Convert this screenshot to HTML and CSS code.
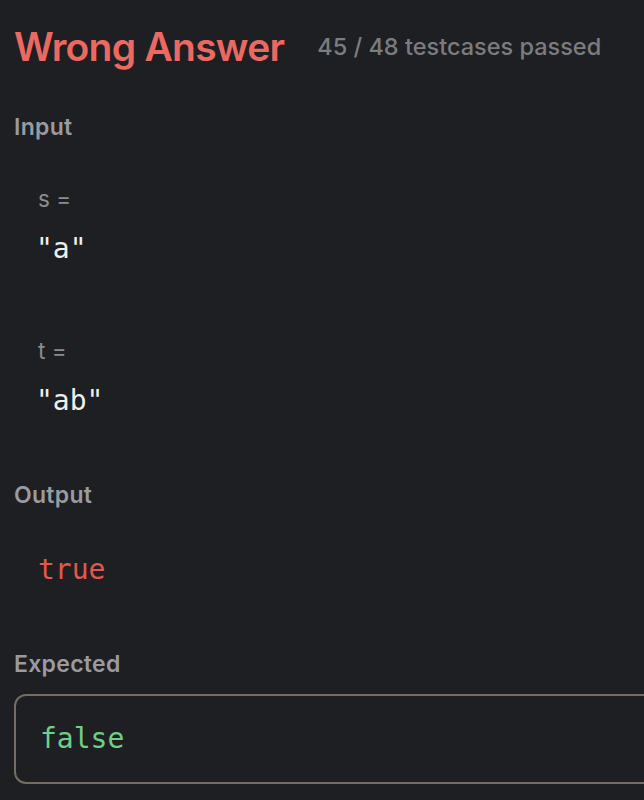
FILE: index.html
```html
<!DOCTYPE html>
<html lang="en">
<head>
<meta charset="utf-8">
<title>Wrong Answer</title>
<link rel="stylesheet" href="styles.css">
</head>
<body>
<div class="page">
  <div class="header">
    <h1 class="title">Wrong Answer</h1>
    <span class="passed">45 / 48 testcases passed</span>
  </div>

  <div class="section-label label-input">Input</div>
  <div class="vars">
    <div class="var-name">s =</div>
    <div class="var-value">"a"</div>
    <div class="var-name var-name-next">t =</div>
    <div class="var-value">"ab"</div>
  </div>

  <div class="section-label label-output">Output</div>
  <div class="box box-plain"><span class="code code-red">true</span></div>

  <div class="section-label label-expected">Expected</div>
  <div class="box box-bordered"><span class="code code-green">false</span></div>
</div>
</body>
</html>
```

FILE: styles.css
```css
html, body {
  margin: 0;
  padding: 0;
  background: #1e1f22;
}

body {
  font-family: Inter, "Noto Sans", "Liberation Sans", sans-serif;
  overflow: hidden;
}

.page {
  padding: 23px 0 0 14px;
  overflow: hidden;
  height: 777px;
}

.header {
  display: flex;
  align-items: center;
  height: 48px;
}

.title {
  margin: 0;
  font-size: 39px;
  line-height: 48px;
  font-weight: 600;
  color: #eb6961;
  letter-spacing: -0.75px;
}

.passed {
  margin-left: 33px;
  font-size: 23.5px;
  line-height: 32px;
  font-weight: 500;
  letter-spacing: 0;
  color: #7b7c80;
}

.section-label {
  font-size: 23px;
  line-height: 32px;
  font-weight: 600;
  letter-spacing: 0.3px;
  color: #9a9ba0;
}

.label-input { margin-top: 40px; }
.label-output { margin-top: 60px; }
.label-expected { margin-top: 33px; }

.vars {
  padding-left: 24px;
  margin-top: 40px;
}

.var-name {
  font-size: 22.5px;
  line-height: 32px;
  color: #8b8c90;
}

.var-name-next {
  margin-top: 68px;
}

.var-value {
  margin-top: 16px;
  margin-left: -2px;
  font-family: "DejaVu Sans Mono", "Liberation Mono", monospace;
  font-size: 28px;
  line-height: 36px;
  color: #eeeeee;
}

.box {
  margin-top: 14px;
  margin-right: -60px;
  padding: 25px 22px;
  border: 2px solid transparent;
  border-radius: 12px;
}

.box-bordered {
  border-color: #746d61;
  padding-left: 24px;
}

.code {
  display: block;
  font-family: "DejaVu Sans Mono", "Liberation Mono", monospace;
  font-size: 28px;
  line-height: 36px;
}

.code-red { color: #e3574e; }
.code-green { color: #6fcf86; }
```
